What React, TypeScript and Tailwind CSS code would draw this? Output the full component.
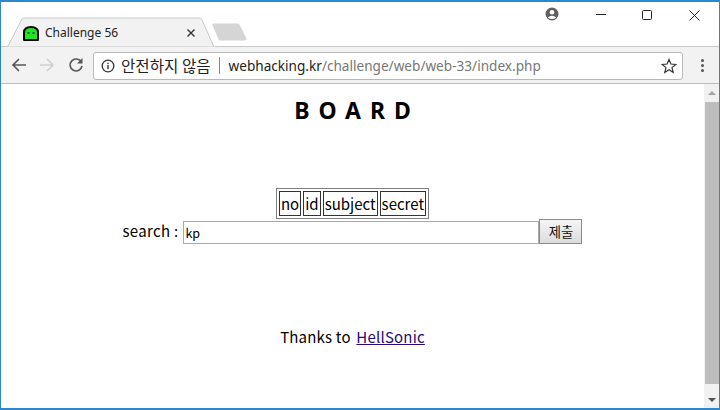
export default function App() {
  const kr = 'font-["Noto_Sans_CJK_KR","Noto_Sans",sans-serif]';
  return (
    <div className={`w-[720px] h-[410px] overflow-hidden flex flex-col border border-t-2 border-b-2 border-[#2b88d0] bg-white ${kr}`}>
      {/* title strip */}
      <div className="h-[45px] flex shrink-0 bg-white">
        <div className="w-[6px] self-end h-px bg-[#c8c8c8]" />
        <div className="relative w-[208px] h-[45px] flex items-center pl-[16px] pr-[19px] pt-[18px]">
          <svg className="absolute left-0 top-0" width="208" height="45" viewBox="0 0 208 45">
            <path d="M0 45 L1 44 L15 17 Q16 16 18 16 L192 16 Q194 16 195 18 L207 45 Z" fill="#f2f2f2" stroke="#c9c9c9" />
          </svg>
          <svg className="relative" width="16" height="15" viewBox="0 0 16 15">
            <path d="M1 14 L1 6.5 Q1 1 8 1 Q15 1 15 6.5 L15 14 Z" fill="#22e51f" stroke="#000" strokeWidth="2" strokeLinejoin="round" />
            <rect x="4.5" y="6" width="2" height="2" fill="#063" />
            <rect x="9.5" y="6" width="2" height="2" fill="#063" />
          </svg>
          <span className="relative ml-[6px] text-[12px] leading-none text-[#222] font-['Noto_Sans',sans-serif] -mt-[2px]">Challenge 56</span>
          <svg className="relative ml-auto -mt-[2px]" width="10" height="10" viewBox="0 0 10 10">
            <path d="M1.5 1.5 L8.5 8.5 M8.5 1.5 L1.5 8.5" stroke="#333" strokeWidth="1.4" />
          </svg>
        </div>
        <div className="flex-1 flex flex-col">
          <div className="h-[10px] flex justify-end">
            <div className="flex items-start">
              <svg className="mr-[37px] mt-[5px]" width="14" height="14" viewBox="0 0 14 14">
                <circle cx="7" cy="7" r="6.5" fill="#606060" />
                <circle cx="7" cy="5.2" r="2.3" fill="#fff" />
                <path d="M2.8 10.6 Q7 6.8 11.2 10.6 Q7 13.6 2.8 10.6 Z" fill="#fff" />
              </svg>
              <svg className="mr-[36px] mt-[12px]" width="10" height="2" viewBox="0 0 10 2"><rect width="10" height="1" fill="#222" /></svg>
              <svg className="mr-[37px] mt-[8px]" width="10" height="10" viewBox="0 0 10 10"><rect x="0.5" y="0.5" width="9" height="9" rx="1" fill="none" stroke="#222" /></svg>
              <svg className="mr-[19px] mt-[8px]" width="11" height="11" viewBox="0 0 11 11"><path d="M0.5 0.5 L10.5 10.5 M10.5 0.5 L0.5 10.5" stroke="#222" /></svg>
            </div>
          </div>
          <div className="flex-1 flex items-end">
            <div className="flex-1 flex flex-col justify-end">
              <svg className="ml-[-3px] mb-[4px]" width="36" height="19" viewBox="0 0 36 19">
                <path d="M2 2 H26 L33 16 H8 Z" fill="#d5d5d5" stroke="#d5d5d5" strokeWidth="3" strokeLinejoin="round" />
              </svg>
              <div className="h-px bg-[#c8c8c8]" />
            </div>
          </div>
        </div>
      </div>
      {/* toolbar */}
      <div className="h-[37px] shrink-0 bg-[#f2f2f2] border-b border-[#bdbdbd] flex items-center pl-[10px] pr-[15px]">
        <svg width="16" height="16" viewBox="0 0 16 16"><path d="M15 8 H2 M8 2 L2 8 L8 14" fill="none" stroke="#555" strokeWidth="1.6" /></svg>
        <svg className="ml-[12px]" width="16" height="16" viewBox="0 0 16 16"><path d="M1 8 H14 M8 2 L14 8 L8 14" fill="none" stroke="#cfcfcf" strokeWidth="1.6" /></svg>
        <svg className="ml-[13px]" width="16" height="16" viewBox="0 0 16 16"><path d="M13.3 5 A6 6 0 1 0 14 9" fill="none" stroke="#555" strokeWidth="1.6" /><path d="M14.5 1 V6.5 H9 Z" fill="#555" /></svg>
        <div className="ml-[9px] w-[590px] h-[28px] mt-px bg-white border border-[#b9b9b9] rounded-[3px] flex items-center pl-[7px] pr-[5px]">
          <svg width="14" height="14" viewBox="0 0 14 14"><circle cx="7" cy="7" r="5.8" fill="none" stroke="#333" strokeWidth="1.3" /><rect x="6.3" y="6" width="1.4" height="4.2" fill="#333" /><rect x="6.3" y="3.7" width="1.4" height="1.4" fill="#333" /></svg>
          <span className="ml-[6px] text-[15.6px] text-[#222] leading-none">안전하지 않음</span>
          <span className="ml-[8px] w-px h-[17px] bg-[#888]" />
          <span className="ml-[9px] text-[13.6px] leading-none text-[#222] font-['Noto_Sans',sans-serif]">webhacking.kr<span className="text-[#777]">/challenge/web/web-33/index.php</span></span>
          <svg className="ml-auto" width="16" height="16" viewBox="0 0 16 16"><path d="M8 1.5 L9.9 6 L14.8 6.4 L11 9.6 L12.2 14.4 L8 11.8 L3.8 14.4 L5 9.6 L1.2 6.4 L6.1 6 Z" fill="none" stroke="#333" strokeWidth="1.2" /></svg>
        </div>
        <div className="ml-auto flex flex-col gap-[2px]">
          <div className="w-[3px] h-[3px] rounded-full bg-[#555]" />
          <div className="w-[3px] h-[3px] rounded-full bg-[#555]" />
          <div className="w-[3px] h-[3px] rounded-full bg-[#555]" />
        </div>
      </div>
      {/* page */}
      <div className="flex-1 flex min-h-0">
        <div className="flex-1 flex flex-col items-center text-black text-[16px]">
          <div className="mt-[8px] h-[36px] leading-[36px] text-[23px] font-bold tracking-[0.39em] pl-[0.39em] font-['Noto_Sans',sans-serif]">BOARD</div>
          <table className="mt-[60px] border border-[#808080] border-separate border-spacing-[2px] leading-[23px] text-[15px]">
            <tbody>
              <tr>
                {["no", "id", "subject", "secret"].map((t) => (
                  <td key={t} className="border border-[#333] px-px">{t}</td>
                ))}
              </tr>
            </tbody>
          </table>
          <div className="flex items-end h-[25px]">
            <span className="mr-[5px] mb-px leading-[25px] text-[15px] tracking-[0.3px]">search :</span>
            <input readOnly value="kp" className="w-[356px] h-[23px] border border-[#a9a9a9] px-px text-[12.5px] text-black outline-none" />
            <button className="w-[43px] h-[25px] border border-[#8a8a8a] bg-gradient-to-b from-[#f5f5f5] to-[#dcdcdc] text-[13.33px] text-[#111]">제출</button>
          </div>
          <div className="mt-[81px] text-[15px] leading-[24px] tracking-[0.2px]">
            Thanks to <a className="underline text-[#2a0a7a] ml-[2px]">HellSonic</a>
          </div>
        </div>
        <div className="w-[15px] bg-[#f1f1f1] flex flex-col">
          <div className="h-[18px] flex items-center justify-center">
            <svg width="8" height="4" viewBox="0 0 8 4"><path d="M4 0 L8 4 H0 Z" fill="#a3a3a3" /></svg>
          </div>
          <div className="flex-1 bg-[#bdbdbd] ml-px" />
          <div className="h-[24px] flex items-end justify-center pb-[6px]">
            <svg width="8" height="4" viewBox="0 0 8 4"><path d="M4 4 L8 0 H0 Z" fill="#505050" /></svg>
          </div>
        </div>
      </div>
    </div>
  );
}
